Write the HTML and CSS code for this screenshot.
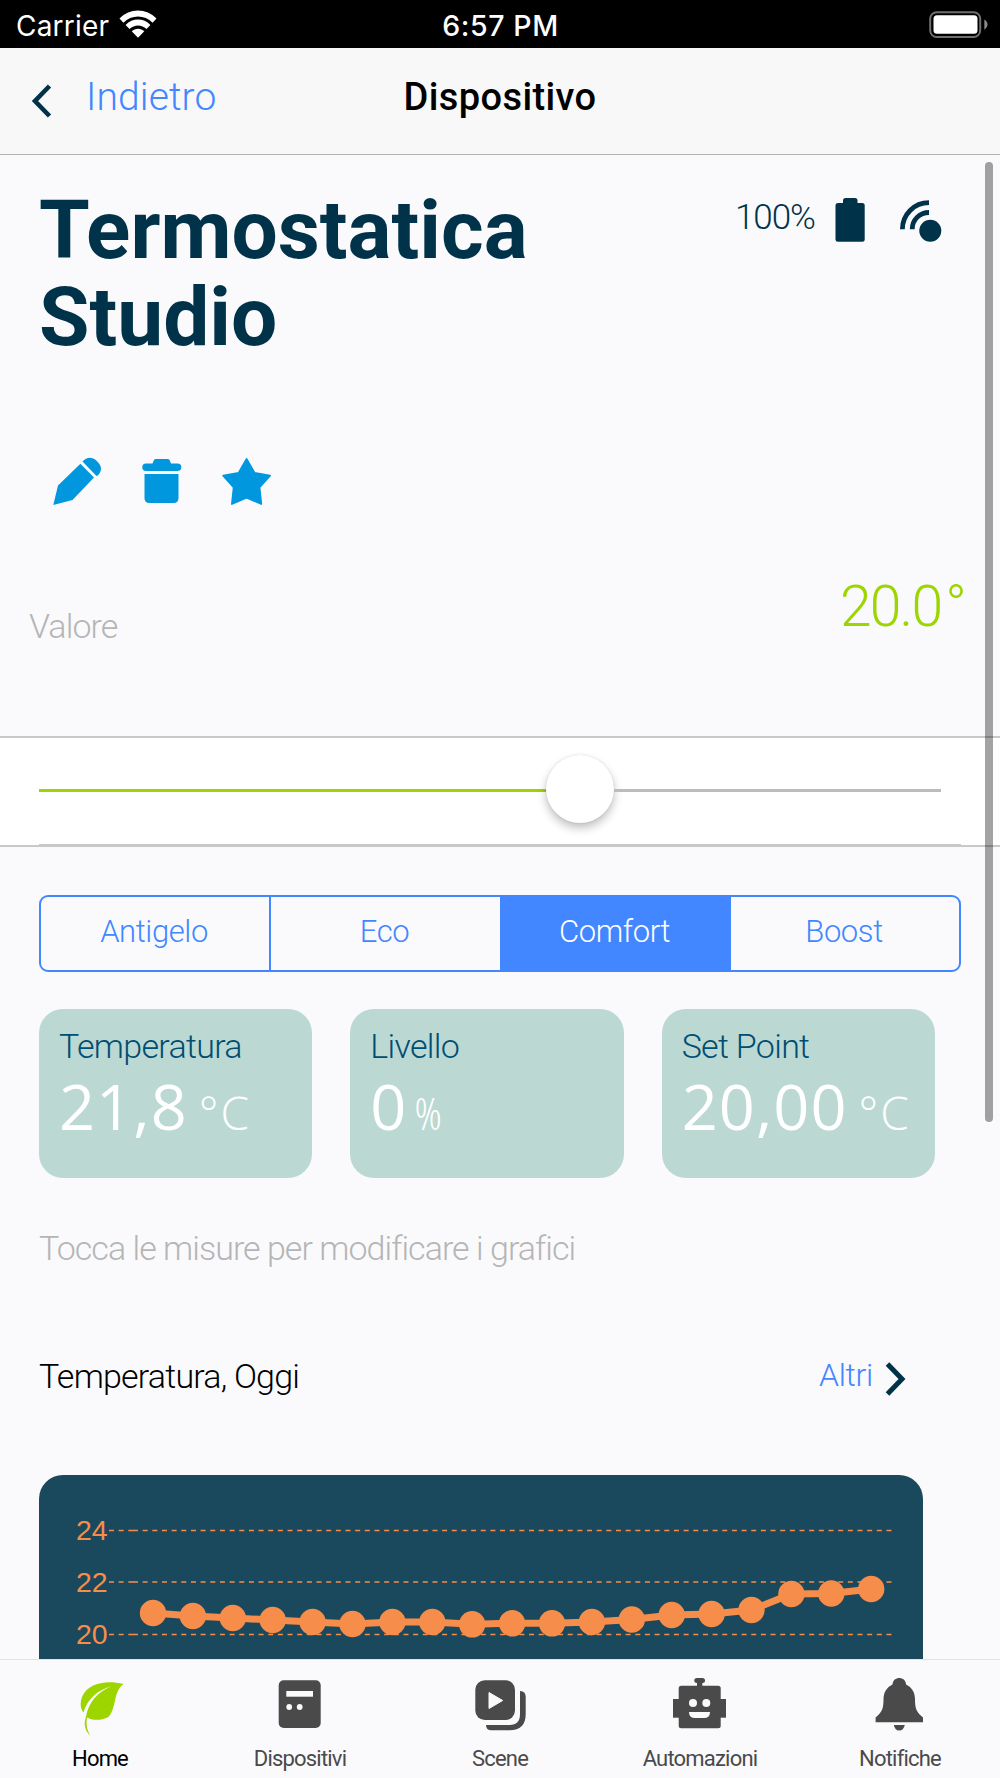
FILE: index.html
```
<!DOCTYPE html>
<html lang="it">
<head>
<meta charset="utf-8">
<meta name="viewport" content="width=device-width, initial-scale=1">
<title>Dispositivo</title>
<link rel="stylesheet" href="styles.css">
</head>
<body>

<div class="statusbar">
  <div class="carrier">
    <span>Carrier</span>
    <svg width="38" height="28" viewBox="0 0 38 28" fill="#fff">
      <path d="M0.5 8.6 C10.5 -2.2 27.5 -2.2 37.5 8.6 L33.6 12.7 C25.7 4.4 12.3 4.4 4.4 12.7 Z"/>
      <path d="M6.6 15 C13.4 7.8 24.6 7.8 31.4 15 L27.5 19 C22.8 14.2 15.2 14.2 10.5 19 Z"/>
      <path d="M12.7 21.3 C16.2 17.8 21.8 17.8 25.3 21.3 L19 27.7 Z"/>
    </svg>
  </div>
  <div class="time">6:57 PM</div>
  <div class="battery">
    <svg width="60" height="28" viewBox="0 0 60 28">
      <rect x="1.2" y="1.2" width="50" height="24.8" rx="6.5" fill="none" stroke="#6f6f6f" stroke-width="2"/>
      <rect x="4.5" y="4.3" width="44" height="18.4" rx="3.5" fill="#fff"/>
      <path d="M55.3 8.5 q3.2 2 3.2 5.1 q0 3.1 -3.2 5.1 z" fill="#8a8a8a"/>
    </svg>
  </div>
</div>

<div class="navbar">
  <a class="back">
    <svg width="22" height="34" viewBox="0 0 22 34"><path d="M18.5 2 L4 17 L18.5 32" fill="none" stroke="#003349" stroke-width="4.6"/></svg>
    <span>Indietro</span>
  </a>
  <h2>Dispositivo</h2>
  <div></div>
</div>

<main>
  <div class="header">
    <h1>Termostatica<br>Studio</h1>
    <div class="signal">
      <span>100%</span>
      <svg class="level" width="30" height="44" viewBox="0 0 30 44" fill="#003349">
        <rect x="8" y="0" width="14.5" height="10" rx="2.5"/>
        <rect x="0.5" y="5" width="29.2" height="38.8" rx="2.5"/>
      </svg>
      <svg width="42" height="43" viewBox="0 0 42 43">
        <g fill="none" stroke="#003349" stroke-width="4.8">
          <path d="M2.4 29.3 C2.4 14.5 14 2.7 29 2.7"/>
          <path d="M12.2 29.3 C12.2 20 19.5 12.5 29 12.5"/>
        </g>
        <circle cx="30.3" cy="30.7" r="11" fill="#003349"/>
      </svg>
    </div>
  </div>

  <div class="actions">
    <svg width="50" height="50" viewBox="0 0 50 50">
      <path d="M0.3 48 L5 28.5 L27.4 6.7 L41 20.6 L19.5 43 Z"/>
      <path d="M29.5 4.6 C33.5 -0.2 39 -0.5 43.3 3.6 L45.2 5.6 C49 9.6 48.8 14.4 45 18.2 L43.5 19 Z"/>
    </svg>
    <svg width="40" height="50" viewBox="0 0 40 50">
      <path d="M4 6.6 H10.5 L11.8 3.3 Q12.5 2 14 2 H25.5 Q27 2 27.7 3.3 L29 6.6 H35.5 Q39.3 6.6 39.3 10.2 Q39.3 14 35.5 14 H4 Q0.3 14 0.3 10.2 Q0.3 6.6 4 6.6 Z"/>
      <path d="M2.5 17 H36.5 V41 Q36.5 46 31.5 46 H7.5 Q2.5 46 2.5 41 Z"/>
    </svg>
    <svg width="50" height="50" viewBox="0 0 50 50">
      <path d="M24.6 2 L32.6 15.9 L48 18.7 L37.5 30.3 L39.3 47 L24.6 40.6 L9.9 47 L11.7 30.3 L1.2 18.7 L16.6 15.9 Z" stroke="#0097df" stroke-width="1.8" stroke-linejoin="round"/>
    </svg>
  </div>

  <div class="value-row">
    <span class="value-label">Valore</span>
    <span class="value">20.0<span class="value-deg">°</span></span>
  </div>

  <div class="slider-band">
    <div class="slider">
      <div class="fill"></div>
      <div class="thumb"></div>
      <div class="rest"></div>
    </div>
    <div class="slider-line"></div>
  </div>

  <div class="segments">
    <button>Antigelo</button>
    <button>Eco</button>
    <button class="active">Comfort</button>
    <button>Boost</button>
  </div>

  <div class="cards">
    <div class="card">
      <div class="card-title">Temperatura</div>
      <div class="card-value">21,8<span class="deg">°C</span></div>
    </div>
    <div class="card">
      <div class="card-title">Livello</div>
      <div class="card-value">0<span class="pct">%</span></div>
    </div>
    <div class="card">
      <div class="card-title">Set Point</div>
      <div class="card-value">20,00<span class="deg">°C</span></div>
    </div>
  </div>

  <p class="hint">Tocca le misure per modificare i grafici</p>

  <div class="chart-head">
    <span>Temperatura, Oggi</span>
    <a class="more">Altri
      <svg width="22" height="34" viewBox="0 0 22 34"><path d="M2.5 2 L17 17 L2.5 32" fill="none" stroke="#003349" stroke-width="5"/></svg>
    </a>
  </div>

  <div class="chart">
    <svg width="884" height="200" viewBox="39 1475 884 200">
      <g class="grid">
        <path d="M109 1530.5 H137 M109 1582 H137 M109 1634.5 H137"/>
        <path d="M133 1530.5 H892 M133 1582 H892 M133 1634.5 H892"/>
      </g>
      <g class="ticks">
        <text x="76" y="1540">24</text>
        <text x="76" y="1592">22</text>
        <text x="76" y="1644">20</text>
      </g>
      <polyline id="line"/>
      <g id="dots"></g>
    </svg>
  </div>

  <div class="scrollbar"></div>
</main>

<div class="tabbar">
  <a class="tab active">
    <svg width="54" height="60" viewBox="73 1676 54 60" fill="#9cd500">
      <path d="M123.5 1684 C104 1679.5 88 1684.5 82.5 1696 C79.5 1703 80.5 1709 83.5 1712.5 C87 1700 97 1690 111.5 1686.3 C98 1692 88.5 1702 86 1716.5 C83.5 1724 84.5 1730 90.5 1736 C86.5 1729 86 1724 87 1717.5 C93 1721 103 1720.5 109 1716.5 C117 1706 113 1692 123.5 1684 Z"/>
    </svg>
    <span>Home</span>
  </a>
  <a class="tab">
    <svg width="54" height="60" viewBox="273 1676 54 60">
      <rect x="278.7" y="1680.3" width="42" height="47.7" rx="5"/>
      <rect x="286.3" y="1691" width="26.7" height="5.7" fill="#fafafc"/>
      <circle cx="289.2" cy="1707" r="2.9" fill="#fafafc"/>
      <circle cx="299.7" cy="1707" r="2.9" fill="#fafafc"/>
    </svg>
    <span>Dispositivi</span>
  </a>
  <a class="tab">
    <svg width="54" height="60" viewBox="473 1676 54 60">
      <rect x="475.3" y="1680.3" width="39.7" height="39.7" rx="9.5"/>
      <path d="M489 1692.5 L502.7 1700.5 L489 1708.5 Z" fill="#fafafc" stroke="#fafafc" stroke-linejoin="round"/>
      <path d="M520 1691 Q525.7 1691 525.7 1697 V1714 Q525.7 1730.3 509.5 1730.3 H491.5 Q486 1730.3 486 1725 H509.5 Q520 1725 520 1714 Z"/>
    </svg>
    <span>Scene</span>
  </a>
  <a class="tab">
    <svg width="54" height="60" viewBox="673 1676 54 60">
      <rect x="694.3" y="1678" width="10.7" height="5" rx="2.5"/>
      <rect x="697" y="1680" width="5.3" height="8"/>
      <rect x="678.7" y="1685.7" width="42" height="42.5" rx="2.5"/>
      <rect x="673" y="1699" width="53" height="18.7"/>
      <circle cx="693" cy="1703" r="4" fill="#fafafc"/>
      <circle cx="706.3" cy="1703" r="4" fill="#fafafc"/>
      <path d="M689 1712 H710 Q710 1718 704 1718 H695 Q689 1718 689 1712 Z" fill="#fafafc"/>
    </svg>
    <span>Automazioni</span>
  </a>
  <a class="tab">
    <svg width="54" height="60" viewBox="873 1676 54 60">
      <path d="M892.5 1684.5 C893 1675.9 905.6 1675.9 906.1 1684.5 C912 1687.5 915 1692.5 915 1699 C915 1709 916.5 1712 923 1717.5 V1722.3 H875.6 V1717.5 C882 1712 883.5 1709 883.5 1699 C883.5 1692.5 886.5 1687.5 892.5 1684.5 Z"/>
      <path d="M893.8 1725 H904.8 Q903.5 1730.6 899.3 1730.6 Q895 1730.6 893.8 1725 Z"/>
    </svg>
    <span>Notifiche</span>
  </a>
</div>

<script>
  // y position of each reading, one every 39.93px
  const readings = [1613, 1616, 1618, 1620, 1622, 1624, 1622, 1622, 1624.3, 1623.3, 1623.3, 1622, 1619.5, 1615, 1614, 1610, 1594, 1593.5, 1589];
  const points = readings.map((y, i) => [153 + i * 39.9, y]);

  document.getElementById('line').setAttribute('points', points.map(p => p.join(',')).join(' '));
  document.getElementById('dots').innerHTML = points.map(p => `<circle cx="${p[0]}" cy="${p[1]}" r="13.2"/>`).join('');
</script>

</body>
</html>
```
FILE: styles.css
```
* {
  box-sizing: border-box;
}

body {
  margin: 0;
  width: 1000px;
  height: 1778px;
  display: flex;
  flex-direction: column;
  overflow: hidden;
  background-color: #fafafc;
  font-family: Roboto, "Open Sans", sans-serif;
  font-weight: 300;
}

svg {
  display: block;
  flex: none;
}

h1, h2, p {
  margin: 0;
}

.statusbar {
  height: 48px;
  background-color: black;
  color: white;
  display: grid;
  grid-template-columns: 1fr auto 1fr;
  align-items: center;
  padding: 0 11px 0 16px;
  font-family: Inter, sans-serif;
  font-size: 28px;
  line-height: 34px;
}

.carrier {
  display: flex;
  align-items: center;
  gap: 10px;
  font-weight: 400;
  letter-spacing: 0.2px;
}

.carrier span {
  padding-top: 3px;
}

.time {
  padding-top: 3px;
  font-size: 28.5px;
  font-weight: 500;
  letter-spacing: 0.6px;
  margin-right: 4px;
}

.battery {
  justify-self: end;
  padding-top: 2px;
}

.navbar {
  height: 107px;
  background-color: #f8f8f8;
  border-bottom: 1px solid #b2b2b2;
  display: grid;
  grid-template-columns: 1fr auto 1fr;
  line-height: 98px;
}

.navbar h2 {
  font-size: 38px;
  font-weight: 500;
  letter-spacing: 0.4px;
}

.back {
  display: flex;
  align-items: flex-start;
  padding-left: 31px;
  color: #4287ff;
  font-size: 39px;
  letter-spacing: 0.1px;
}

.back svg {
  margin-top: 36px;
  margin-right: 33px;
}

main {
  height: 1504px;
  position: relative;
  overflow: hidden;
}

.header {
  display: flex;
  justify-content: space-between;
  align-items: flex-start;
  padding: 32px 58px 0 39px;
  color: #003349;
}

.header h1 {
  font-size: 82px;
  line-height: 87px;
  font-weight: 700;
}

.signal {
  display: flex;
  align-items: center;
  font-size: 35px;
  line-height: 62px;
  letter-spacing: -1px;
}

.signal .level {
  margin: 4px 35px 0 20px;
}

.signal svg:last-child {
  margin-top: 7px;
}

.actions {
  display: flex;
  align-items: center;
  margin: 96px 0 0 53px;
  height: 50px;
  fill: #0097df;
}

.actions svg:nth-child(2) {
  margin: 0 40px 0 39px;
}

.value-row {
  display: flex;
  justify-content: space-between;
  align-items: flex-start;
  height: 229px;
  padding: 68px 35px 0 29px;
}

.value-label {
  margin-top: 31px;
  color: #b5b5b5;
  font-size: 34px;
  line-height: 40px;
  letter-spacing: -0.9px;
}

.value {
  color: #9cd500;
  font-size: 57px;
  line-height: 64px;
  letter-spacing: -1.8px;
}

.value-deg {
  margin-left: 4px;
}

.slider-band {
  height: 111px;
  background-color: white;
  border-top: 2px solid #c8c8ca;
  border-bottom: 2px solid #c8c8ca;
  padding: 0 39px;
}

.slider {
  display: flex;
  align-items: center;
  height: 106px;
  width: 902px;
  padding-bottom: 2px;
}

.fill {
  width: 507px;
  height: 3px;
  background-color: #9cd500;
}

.thumb {
  width: 68px;
  height: 68px;
  margin-top: -3px;
  border-radius: 50%;
  background-color: white;
  box-shadow: 0 5px 10px rgba(0, 0, 0, 0.25), 0 0 2px rgba(0, 0, 0, 0.12);
}

.rest {
  flex: 1;
  height: 3px;
  background-color: #bcbcbc;
}

.slider-line {
  height: 1px;
  background-color: #c8c8ca;
}

.segments {
  display: grid;
  grid-template-columns: 230px 229px 231px 1fr;
  margin: 48px 39px 0;
  height: 77px;
  border: 2px solid #4287ff;
  border-radius: 9px;
  overflow: hidden;
}

.segments button {
  border: none;
  background: none;
  padding: 0 2px 5px 0;
  font: 300 31px/67px Roboto, sans-serif;
  letter-spacing: -0.4px;
  color: #4287ff;
}

.segments button:first-child {
  border-right: 2px solid #4287ff;
}

.segments .active {
  background-color: #4287ff;
  color: white;
}

.cards {
  display: flex;
  gap: 38px;
  margin: 37px 65px 0 39px;
}

.card {
  flex: 1;
  height: 169px;
  padding: 17px 0 0 20px;
  background-color: #bbd9d2;
  border-radius: 24px;
}

.card-title {
  color: #004d73;
  font-size: 34px;
  line-height: 40px;
  letter-spacing: -0.7px;
}

.card-value {
  margin-top: 5px;
  color: white;
  font-family: "Open Sans", sans-serif;
  font-size: 63px;
  line-height: 70px;
  letter-spacing: 1.1px;
  font-weight: 380;
  white-space: nowrap;
}

.deg {
  font-size: 46px;
  font-stretch: 90%;
  margin-left: 11px;
  letter-spacing: 2px;
  font-weight: 350;
}

.pct {
  font-size: 45px;
  font-stretch: 75%;
  font-weight: 300;
  margin-left: 7px;
}

.hint {
  margin: 50px 0 0 39px;
  color: #b5b5b5;
  font-size: 34px;
  line-height: 40px;
  letter-spacing: -0.97px;
}

.chart-head {
  display: flex;
  justify-content: space-between;
  margin: 88px 93px 0 39px;
  font-size: 34px;
  line-height: 40px;
  letter-spacing: -0.8px;
}

.more {
  display: flex;
  gap: 12px;
  color: #4287ff;
  font-size: 32px;
  line-height: 39px;
  letter-spacing: -0.3px;
}

.more svg {
  margin-top: 6px;
}

.chart {
  margin: 79px 77px 0 39px;
  height: 200px;
  border-radius: 24px 24px 0 0;
  background-color: #1a485c;
  overflow: hidden;
}

.grid path {
  stroke: #f78d4a;
  stroke-width: 1.3;
  stroke-dasharray: 5 4.66;
}

.ticks text {
  fill: #f78d4a;
  font: 400 28.5px "Liberation Sans", sans-serif;
}

#line {
  fill: none;
  stroke: #f78d4a;
  stroke-width: 7;
}

#dots {
  fill: #f78d4a;
}

.scrollbar {
  position: absolute;
  top: 7px;
  right: 7px;
  width: 8px;
  height: 960px;
  border-radius: 4px;
  background-color: rgba(0, 0, 0, 0.36);
}

.tabbar {
  height: 119px;
  border-top: 1px solid #e2e2ee;
  display: flex;
}

.tab {
  flex: 1;
  display: flex;
  flex-direction: column;
  align-items: center;
  padding-top: 16px;
  color: #4a4a4a;
  fill: #4a4a4a;
  font-size: 22px;
  line-height: 26px;
  font-weight: 400;
  letter-spacing: -0.8px;
}

.tab span {
  margin-top: 10px;
}

.tab.active {
  color: black;
}
```
